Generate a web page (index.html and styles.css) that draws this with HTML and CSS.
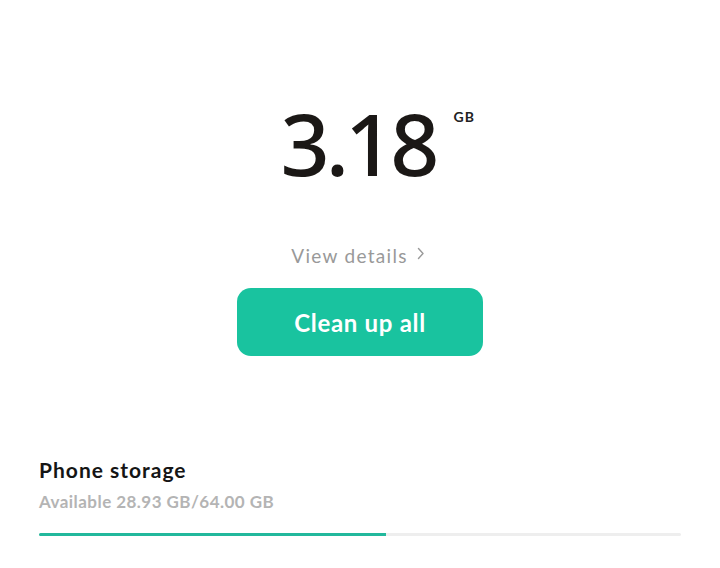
FILE: index.html
```html
<!DOCTYPE html>
<html>
<head>
<meta charset="utf-8">
<link rel="stylesheet" href="styles.css">
</head>
<body>
<div class="screen">
  <section class="summary">
    <div class="size">
      <span class="num">3.18</span>
      <span class="unit">GB</span>
    </div>
    <a class="details">View details
      <svg class="chev" width="8" height="13" viewBox="0 0 8 13"><path d="M1.5 1.5 L6 6.5 L1.5 11.5" fill="none" stroke="#9a9a9a" stroke-width="1.4" stroke-linecap="round" stroke-linejoin="round"/></svg>
    </a>
    <button class="clean">Clean up all</button>
  </section>
  <section class="storage">
    <div class="title">Phone storage</div>
    <div class="sub">Available 28.93 GB/64.00 GB</div>
    <div class="track"><div class="fill" style="width:54%"></div></div>
  </section>
</div>
</body>
</html>
```
FILE: styles.css
```css
html, body {
  margin: 0;
  padding: 0;
  background: #ffffff;
}
.screen {
  width: 720px;
  height: 568px;
  font-family: "Lato", "Noto Sans", sans-serif;
  display: flex;
  flex-direction: column;
}
.summary {
  display: flex;
  flex-direction: column;
  align-items: center;
  padding-top: 88px;
}
.size {
  position: relative;
  height: 110px;
  display: flex;
  justify-content: center;
}
.num {
  font-size: 86px;
  font-weight: 500;
  color: #1b1816;
  line-height: 110px;
  letter-spacing: -4px;
  padding-right: 4px;
  font-family: "Noto Sans", sans-serif;
}
.unit {
  position: absolute;
  left: 100%;
  top: 20px;
  margin-left: 14px;
  font-size: 14px;
  font-weight: 700;
  color: #222;
  letter-spacing: 1px;
}
.details {
  margin-top: 46px;
  display: flex;
  align-items: center;
  gap: 9px;
  font-size: 19px;
  color: #999999;
  letter-spacing: 1.3px;
  line-height: 24px;
  padding-right: 4px;
}
.chev {
  margin-top: -6px;
}
.clean {
  margin-top: 20px;
  width: 246px;
  height: 68px;
  border: none;
  border-radius: 14px;
  background: #19c39f;
  color: #ffffff;
  font-family: "Lato", sans-serif;
  font-size: 24px;
  font-weight: 700;
  letter-spacing: 0.7px;
  padding: 0;
}
.storage {
  padding: 0 39px;
  margin-top: 100px;
}
.title {
  font-size: 21px;
  font-weight: 700;
  color: #151515;
  letter-spacing: 1px;
  line-height: 28px;
}
.sub {
  margin-top: 7px;
  font-size: 17px;
  font-weight: 700;
  color: #b4b4b4;
  letter-spacing: 0.45px;
  line-height: 22px;
}
.track {
  margin-top: 20px;
  height: 3px;
  background: #eeeeee;
  border-radius: 2px;
  overflow: hidden;
}
.fill {
  height: 100%;
  background: #22b89c;
}
```
